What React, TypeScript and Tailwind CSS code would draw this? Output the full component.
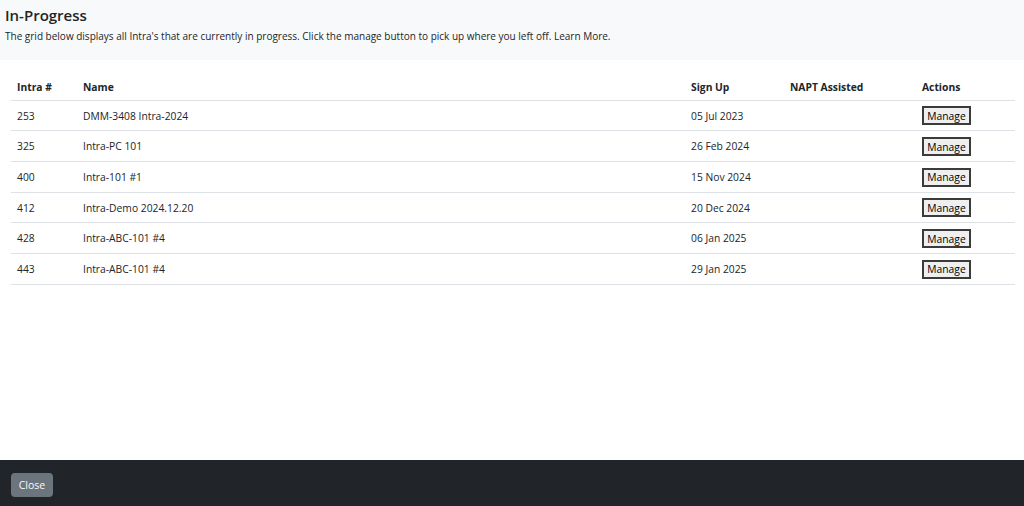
const ROWS = [
  { id: '253', name: 'DMM-3408 Intra-2024', signUp: '05 Jul 2023' },
  { id: '325', name: 'Intra-PC 101', signUp: '26 Feb 2024' },
  { id: '400', name: 'Intra-101 #1', signUp: '15 Nov 2024' },
  { id: '412', name: 'Intra-Demo 2024.12.20', signUp: '20 Dec 2024' },
  { id: '428', name: 'Intra-ABC-101 #4', signUp: '06 Jan 2025' },
  { id: '443', name: 'Intra-ABC-101 #4', signUp: '29 Jan 2025' },
];

export default function App() {
  return (
    <div
      className="flex flex-col h-[506px] w-full bg-white text-[#212529]"
      style={{ fontFamily: '"Open Sans", "Noto Sans", Arial, sans-serif' }}
    >
      {/* header */}
      <div className="bg-[#f8f9fa] h-[60px] px-[5px] pt-[5px]">
        <h2 className="text-[15px] font-semibold leading-[20px] text-[#212529]">In-Progress</h2>
        <p className="text-[10px] leading-[16px] mt-[3px]">
          The grid below displays all Intra's that are currently in progress. Click the manage button to pick up where you left off. Learn More.
        </p>
      </div>

      {/* grid */}
      <div className="flex-1 pl-[11px] pr-[9px] pt-[14px]">
        <table className="w-full table-fixed border-collapse text-[10.3px]">
          <thead>
            <tr className="h-[26px] border-b border-[#dee2e6] text-left">
              <th className="w-[66px] pl-[6px] pt-[2px] font-bold">Intra #</th>
              <th className="pl-[6px] pt-[2px] font-bold">Name</th>
              <th className="w-[99px] pl-[6px] pt-[2px] font-bold">Sign Up</th>
              <th className="w-[132px] pl-[6px] pt-[2px] font-bold">NAPT Assisted</th>
              <th className="w-[99px] pl-[6px] pt-[2px] font-bold">Actions</th>
            </tr>
          </thead>
          <tbody>
            {ROWS.map((r, i) => (
              <tr key={i} className="h-[30.7px] border-b border-[#dee2e6]">
                <td className="pl-[6px] pt-[2px]">{r.id}</td>
                <td className="pl-[6px] pt-[2px]">{r.name}</td>
                <td className="pl-[6px] pt-[2px]">{r.signUp}</td>
                <td className="pl-[6px] pt-[2px]"></td>
                <td className="pl-[6px] pt-[1px]">
                  <button className="h-[19px] w-[49px] border-2 border-[#3b3b3b] bg-[#efefef] text-[10.3px] leading-[14px] text-black">
                    Manage
                  </button>
                </td>
              </tr>
            ))}
          </tbody>
        </table>
      </div>

      {/* footer */}
      <div className="h-[46px] bg-[#212529] flex items-start pt-[13px] px-[11px]">
        <button className="h-[24px] w-[42px] rounded-[4px] bg-[#6c757d] pt-[1px] text-[#f8f9fa] text-[10.5px]">Close</button>
      </div>
    </div>
  );
}
